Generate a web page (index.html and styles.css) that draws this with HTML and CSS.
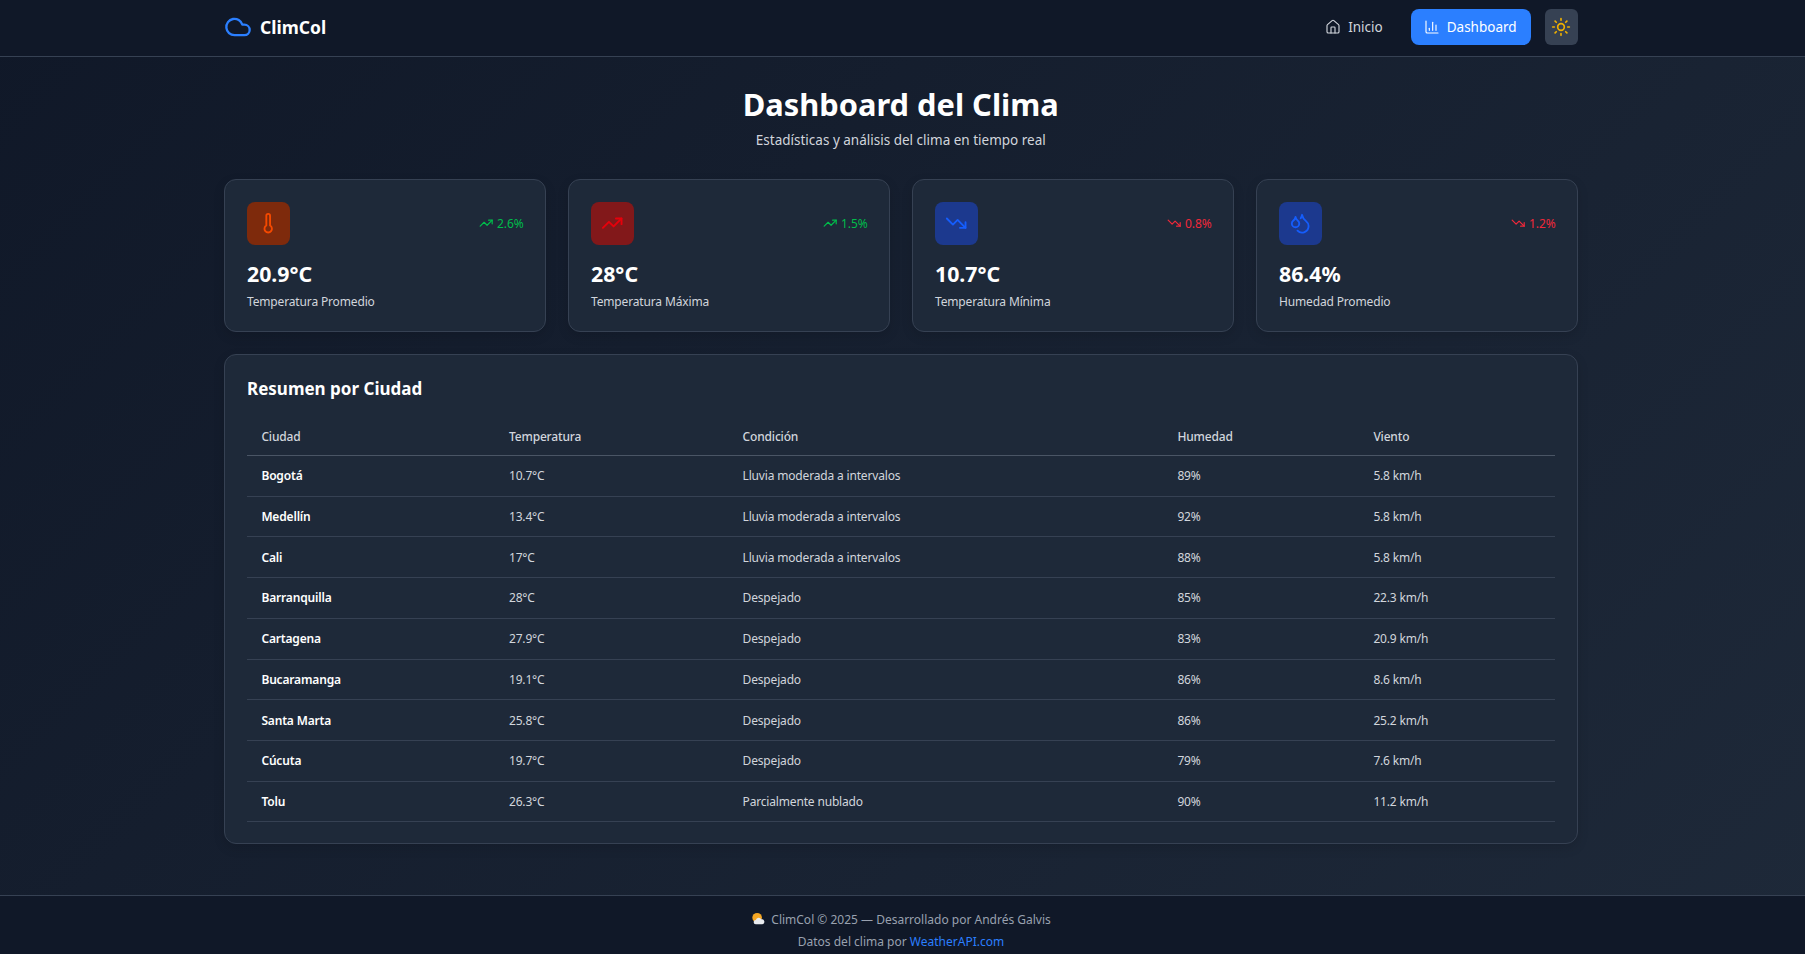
FILE: index.html
```html
<!DOCTYPE html>
<html lang="es">
<head>
  <meta charset="utf-8">
  <title>ClimCol - Dashboard</title>
  <link rel="stylesheet" href="styles.css">
</head>
<body>

<svg class="sprite" xmlns="http://www.w3.org/2000/svg">
  <symbol id="i-cloud" viewBox="0 0 24 24"><path d="M17.5 19H9a7 7 0 1 1 6.71-9h1.79a4.5 4.5 0 1 1 0 9Z"/></symbol>
  <symbol id="i-house" viewBox="0 0 24 24"><path d="M15 21v-8a1 1 0 0 0-1-1h-4a1 1 0 0 0-1 1v8"/><path d="M3 10a2 2 0 0 1 .709-1.528l7-5.999a2 2 0 0 1 2.582 0l7 5.999A2 2 0 0 1 21 10v9a2 2 0 0 1-2 2H5a2 2 0 0 1-2-2z"/></symbol>
  <symbol id="i-chart" viewBox="0 0 24 24"><path d="M3 3v16a2 2 0 0 0 2 2h16"/><path d="M18 17V9"/><path d="M13 17V5"/><path d="M8 17v-3"/></symbol>
  <symbol id="i-sun" viewBox="0 0 24 24"><circle cx="12" cy="12" r="4"/><path d="M12 2v2"/><path d="M12 20v2"/><path d="m4.93 4.93 1.41 1.41"/><path d="m17.66 17.66 1.41 1.41"/><path d="M2 12h2"/><path d="M20 12h2"/><path d="m6.34 17.66-1.41 1.41"/><path d="m19.07 4.93-1.41 1.41"/></symbol>
  <symbol id="i-thermo" viewBox="0 0 24 24"><path d="M14 4v10.54a4 4 0 1 1-4 0V4a2 2 0 0 1 4 0Z"/></symbol>
  <symbol id="i-up" viewBox="0 0 24 24"><polyline points="22 7 13.5 15.5 8.5 10.5 2 17"/><polyline points="16 7 22 7 22 13"/></symbol>
  <symbol id="i-down" viewBox="0 0 24 24"><polyline points="22 17 13.5 8.5 8.5 13.5 2 7"/><polyline points="16 17 22 17 22 11"/></symbol>
  <symbol id="i-drops" viewBox="0 0 24 24"><path d="M7 16.3c2.2 0 4-1.83 4-4.05 0-1.16-.57-2.26-1.71-3.19S7.29 6.75 7 5.3c-.29 1.45-1.14 2.84-2.29 3.76S3 11.1 3 12.25c0 2.22 1.8 4.05 4 4.05z"/><path d="M12.56 6.6A10.97 10.97 0 0 0 14 3.02c.5 2.5 2 4.9 4 6.5s3 3.5 3 5.5a6.98 6.98 0 0 1-11.91 4.97"/></symbol>
</svg>

<header class="navbar">
  <div class="wrap navbar-inner">
    <a class="logo" href="#">
      <svg class="icon logo-icon"><use href="#i-cloud"/></svg>
      <span>ClimCol</span>
    </a>
    <nav class="nav">
      <a class="nav-link" href="#"><svg class="icon nav-icon"><use href="#i-house"/></svg>Inicio</a>
      <a class="nav-link active" href="#"><svg class="icon nav-icon"><use href="#i-chart"/></svg>Dashboard</a>
      <button class="theme-btn"><svg class="icon sun-icon"><use href="#i-sun"/></svg></button>
    </nav>
  </div>
</header>

<main class="wrap main">
  <div class="page-head">
    <h1>Dashboard del Clima</h1>
    <p>Estadísticas y análisis del clima en tiempo real</p>
  </div>

  <section class="stats">
    <div class="card stat">
      <div class="stat-top">
        <div class="stat-icon orange"><svg class="icon"><use href="#i-thermo"/></svg></div>
        <span class="trend good"><svg class="icon"><use href="#i-up"/></svg>2.6%</span>
      </div>
      <div class="stat-value">20.9°C</div>
      <div class="stat-label">Temperatura Promedio</div>
    </div>
    <div class="card stat">
      <div class="stat-top">
        <div class="stat-icon red"><svg class="icon"><use href="#i-up"/></svg></div>
        <span class="trend good"><svg class="icon"><use href="#i-up"/></svg>1.5%</span>
      </div>
      <div class="stat-value">28°C</div>
      <div class="stat-label">Temperatura Máxima</div>
    </div>
    <div class="card stat">
      <div class="stat-top">
        <div class="stat-icon blue"><svg class="icon"><use href="#i-down"/></svg></div>
        <span class="trend bad"><svg class="icon"><use href="#i-down"/></svg>0.8%</span>
      </div>
      <div class="stat-value">10.7°C</div>
      <div class="stat-label">Temperatura Mínima</div>
    </div>
    <div class="card stat">
      <div class="stat-top">
        <div class="stat-icon blue"><svg class="icon"><use href="#i-drops"/></svg></div>
        <span class="trend bad"><svg class="icon"><use href="#i-down"/></svg>1.2%</span>
      </div>
      <div class="stat-value">86.4%</div>
      <div class="stat-label">Humedad Promedio</div>
    </div>
  </section>

  <section class="card summary">
    <h2>Resumen por Ciudad</h2>
    <table class="city-table">
      <colgroup>
        <col class="col-city"><col class="col-temp"><col class="col-cond"><col class="col-hum"><col class="col-wind">
      </colgroup>
      <thead>
        <tr><th>Ciudad</th><th>Temperatura</th><th>Condición</th><th>Humedad</th><th>Viento</th></tr>
      </thead>
      <tbody>
        <tr><td class="city">Bogotá</td><td>10.7°C</td><td>Lluvia moderada a intervalos</td><td>89%</td><td>5.8 km/h</td></tr>
        <tr><td class="city">Medellín</td><td>13.4°C</td><td>Lluvia moderada a intervalos</td><td>92%</td><td>5.8 km/h</td></tr>
        <tr><td class="city">Cali</td><td>17°C</td><td>Lluvia moderada a intervalos</td><td>88%</td><td>5.8 km/h</td></tr>
        <tr><td class="city">Barranquilla</td><td>28°C</td><td>Despejado</td><td>85%</td><td>22.3 km/h</td></tr>
        <tr><td class="city">Cartagena</td><td>27.9°C</td><td>Despejado</td><td>83%</td><td>20.9 km/h</td></tr>
        <tr><td class="city">Bucaramanga</td><td>19.1°C</td><td>Despejado</td><td>86%</td><td>8.6 km/h</td></tr>
        <tr><td class="city">Santa Marta</td><td>25.8°C</td><td>Despejado</td><td>86%</td><td>25.2 km/h</td></tr>
        <tr><td class="city">Cúcuta</td><td>19.7°C</td><td>Despejado</td><td>79%</td><td>7.6 km/h</td></tr>
        <tr><td class="city">Tolu</td><td>26.3°C</td><td>Parcialmente nublado</td><td>90%</td><td>11.2 km/h</td></tr>
      </tbody>
    </table>
  </section>
</main>

<footer class="footer">
  <p>
    <svg class="weather-emoji" viewBox="0 0 16 16">
      <circle cx="7" cy="6.5" r="5.5" fill="#f5a623"/>
      <path d="M5.5 14a2.5 2.5 0 0 1 0-5 3.4 3.4 0 0 1 6.3-.6A2.8 2.8 0 0 1 13 14z" fill="#e8eaee"/>
    </svg>
    ClimCol © 2025 — Desarrollado por Andrés Galvis
  </p>
  <p>Datos del clima por <a href="#">WeatherAPI.com</a></p>
</footer>

</body>
</html>
```

FILE: styles.css
```css
*{
  box-sizing: border-box;
}

body{
  margin: 0;
  min-height: 954px;
  display: flex;
  flex-direction: column;
  font-family: "Noto Sans", "Open Sans", sans-serif;
  color: #fff;
  background: linear-gradient(135deg, #101828, #1e2939);
}

a{
  text-decoration: none;
  color: inherit;
}

.sprite{
  display: none;
}

.icon{
  fill: none;
  stroke: currentColor;
  stroke-width: 2;
  stroke-linecap: round;
  stroke-linejoin: round;
}

/* page column sits slightly left of the window centre in the original */
.wrap{
  width: 1353.6px;
  margin-left: 224px;
}

/* navbar ======================================== */

.navbar{
  height: 57px;
  background-color: #101828;
  border-bottom: 1px solid #364153;
}

.navbar-inner{
  height: 54px;
  display: flex;
  align-items: center;
  justify-content: space-between;
}

.logo{
  display: flex;
  align-items: center;
  gap: 8px;
  font-size: 17.5px;
  font-weight: 700;
}

.logo-icon{
  width: 28px;
  height: 28px;
  color: #2b7fff;
}

.nav{
  display: flex;
  align-items: center;
  gap: 14px;
}

.nav-link{
  display: flex;
  align-items: center;
  gap: 7px;
  height: 36px;
  padding: 0 14px 0 13px;
  border-radius: 8px;
  font-size: 13.5px;
  color: #d1d5dc;
}

.nav-link.active{
  background-color: #2b7fff;
  color: #fff;
}

.nav-icon{
  width: 16px;
  height: 16px;
  stroke-width: 1.7;
}

.theme-btn{
  width: 33px;
  height: 36px;
  padding: 0;
  display: flex;
  align-items: center;
  justify-content: center;
  border: 0;
  border-radius: 6px;
  background-color: #364153;
  color: #f0b100;
}

.sun-icon{
  width: 20px;
  height: 20px;
}

/* heading ======================================= */

.main{
  flex: 1;
  padding-top: 25.5px;
}

.page-head{
  text-align: center;
  margin-bottom: 29.5px;
}

.page-head h1{
  margin: 0;
  font-size: 30.8px;
  line-height: 42px;
  font-weight: 700;
}

.page-head p{
  margin: 5px 0 0;
  font-size: 13.5px;
  line-height: 20px;
  color: #d1d5dc;
}

/* cards ========================================= */

.card{
  background-color: #1e2939;
  border: 1px solid #364153;
  border-radius: 12px;
  box-shadow: 0 4px 12px rgba(0, 0, 0, 0.12);
}

.stats{
  display: grid;
  grid-template-columns: repeat(4, 1fr);
  gap: 22.4px;
  margin-bottom: 22.4px;
}

.stat{
  height: 153px;
  padding: 22px;
}

.stat-top{
  display: flex;
  align-items: center;
  justify-content: space-between;
  margin-bottom: 15px;
}

.stat-icon{
  width: 43px;
  height: 43px;
  display: flex;
  align-items: center;
  justify-content: center;
  border-radius: 8px;
}

.stat-icon .icon{
  width: 22.4px;
  height: 22.4px;
}

.orange{
  background-color: #7e2a0c;
  color: #f54900;
}

.red{
  background-color: #82181a;
  color: #e7000b;
}

.blue{
  background-color: #1c398e;
  color: #155dfc;
}

.trend{
  display: flex;
  align-items: center;
  gap: 4px;
  margin-right: -1px;
  font-size: 12px;
  letter-spacing: -0.1px;
}

.trend .icon{
  width: 14.4px;
  height: 14.4px;
}

.good{
  color: #00bc4b;
}

.bad{
  color: #f0283a;
}

.stat-value{
  font-size: 21.3px;
  line-height: 28px;
  font-weight: 700;
}

.stat-label{
  margin-top: 4.5px;
  font-size: 12px;
  letter-spacing: -0.15px;
  line-height: 18px;
  color: #d1d5dc;
}

/* table ========================================= */

.summary{
  height: 490px;
  padding: 22px;
}

.summary h2{
  margin: 0 0 16.6px;
  font-size: 17px;
  line-height: 24px;
  font-weight: 700;
}

.city-table{
  width: 100%;
  table-layout: fixed;
  border-collapse: collapse;
  font-size: 12px;
  letter-spacing: -0.17px;
}

.col-city{ width: 247.6px; }
.col-temp{ width: 233.6px; }
.col-cond{ width: 434.8px; }
.col-hum{ width: 196px; }
.col-wind{ width: 195.6px; }

.city-table th{
  height: 37.6px;
  padding: 0 14.4px;
  text-align: left;
  font-weight: 500;
  color: #d1d5dc;
  border-bottom: 1px solid #4a5565;
}

.city-table td{
  height: 40.7px;
  padding: 0 14.4px;
  color: #d1d5dc;
  border-bottom: 1px solid #364153;
}

.city-table td.city{
  font-weight: 600;
  color: #fff;
}

/* footer ======================================== */

.footer{
  height: 59px;
  padding-top: 15px;
  text-align: center;
  font-size: 12px;
  color: #99a1af;
  background-color: #101828;
  border-top: 1px solid #364153;
}

.footer p{
  margin: 0 0 4px;
  line-height: 18px;
  padding-right: 3px;
}

.footer a{
  color: #2b7fff;
}

.weather-emoji{
  width: 14px;
  height: 14px;
  vertical-align: -2px;
  margin-right: 3px;
}
```
